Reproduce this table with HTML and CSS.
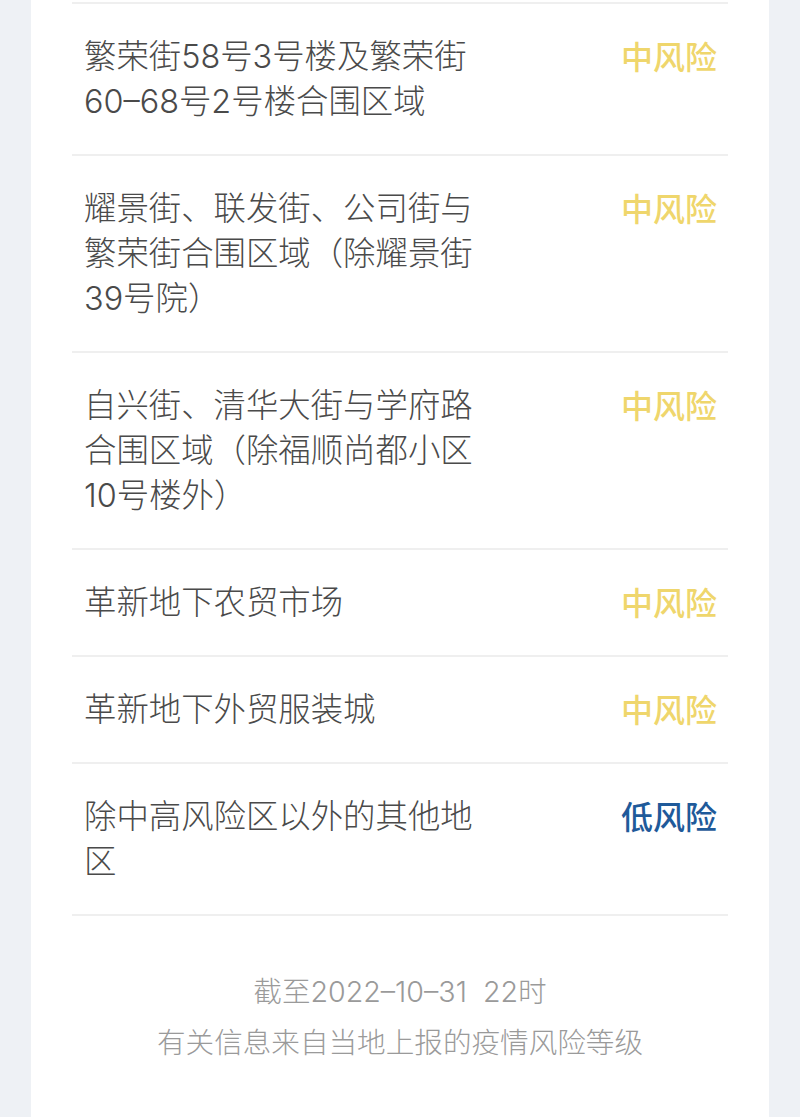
FILE: index.html
```html
<!DOCTYPE html>
<html lang="zh-CN">
<head>
<meta charset="utf-8">
<link rel="stylesheet" href="styles.css">
</head>
<body>
<div class="card">
  <ul class="list">
    <li class="row"><span class="name">繁荣街58号3号楼及繁荣街60–68号2号楼合围区域</span><span class="level mid">中风险</span></li>
    <li class="row"><span class="name">耀景街、联发街、公司街与繁荣街合围区域（除耀景街39号院）</span><span class="level mid">中风险</span></li>
    <li class="row"><span class="name">自兴街、清华大街与学府路合围区域（除福顺尚都小区10号楼外）</span><span class="level mid">中风险</span></li>
    <li class="row"><span class="name">革新地下农贸市场</span><span class="level mid">中风险</span></li>
    <li class="row"><span class="name">革新地下外贸服装城</span><span class="level mid">中风险</span></li>
    <li class="row"><span class="name">除中高风险区以外的其他地区</span><span class="level low">低风险</span></li>
  </ul>
  <div class="footer">
    <p>截至2022–10–31&nbsp;&nbsp;22时</p>
    <p>有关信息来自当地上报的疫情风险等级</p>
  </div>
</div>
</body>
</html>
```

FILE: styles.css
```css
html, body {
  margin: 0;
  padding: 0;
  background: #eef1f5;
  font-family: Inter, "Noto Sans CJK SC", "Noto Sans", sans-serif;
}
.card {
  margin: 0 31px;
  background: #ffffff;
  padding: 2px 41px 60px;
  min-height: 1117px;
  box-sizing: border-box;
}
.list {
  list-style: none;
  margin: 0;
  padding: 0;
  border-top: 2px solid #efefef;
}
.row {
  display: flex;
  justify-content: space-between;
  align-items: flex-start;
  padding: 29px 11px 31px 12px;
  border-bottom: 2px solid #efefef;
}
.name {
  width: 404px;
  padding-top: 1px;
  margin-bottom: -1px;
  font-size: 32.4px;
  line-height: 45px;
  font-weight: 300;
  color: #4a4a4a;
}
.level {
  font-family: "Noto Sans CJK SC", sans-serif;
  font-size: 32px;
  line-height: 45px;
  font-weight: 500;
  white-space: nowrap;
}
.mid { color: #efd66c; }
.low { color: #1f5a9a; }
.footer {
  padding-top: 50px;
  text-align: center;
  color: #9a9a9a;
  font-size: 28.6px;
  line-height: 51px;
  font-weight: 300;
}
.footer p { margin: 0; }
```
